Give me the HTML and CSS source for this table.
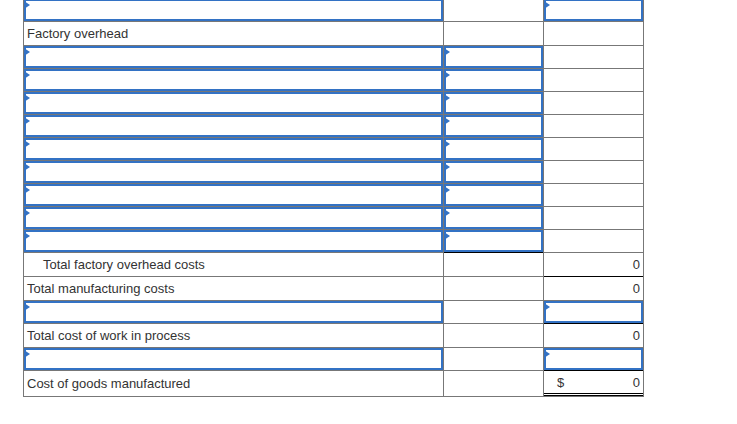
FILE: index.html
```html
<!DOCTYPE html>
<html>
<head>
<meta charset="utf-8">
<link rel="stylesheet" href="styles.css">
</head>
<body>
<div class="sheet">
  <div class="row r-in"><div class="cell"><div class="inp"></div></div><div class="cell"></div><div class="cell"><div class="inp"></div></div></div>
  <div class="row r-tx"><div class="cell lbl">Factory overhead</div><div class="cell"></div><div class="cell"></div></div>
  <div class="row r-in"><div class="cell"><div class="inp"></div></div><div class="cell"><div class="inp"></div></div><div class="cell"></div></div>
  <div class="row r-in"><div class="cell"><div class="inp"></div></div><div class="cell"><div class="inp"></div></div><div class="cell"></div></div>
  <div class="row r-in"><div class="cell"><div class="inp"></div></div><div class="cell"><div class="inp"></div></div><div class="cell"></div></div>
  <div class="row r-in"><div class="cell"><div class="inp"></div></div><div class="cell"><div class="inp"></div></div><div class="cell"></div></div>
  <div class="row r-in"><div class="cell"><div class="inp"></div></div><div class="cell"><div class="inp"></div></div><div class="cell"></div></div>
  <div class="row r-in"><div class="cell"><div class="inp"></div></div><div class="cell"><div class="inp"></div></div><div class="cell"></div></div>
  <div class="row r-in"><div class="cell"><div class="inp"></div></div><div class="cell"><div class="inp"></div></div><div class="cell"></div></div>
  <div class="row r-in"><div class="cell"><div class="inp"></div></div><div class="cell"><div class="inp"></div></div><div class="cell"></div></div>
  <div class="row r-in"><div class="cell"><div class="inp"></div></div><div class="cell"><div class="inp"></div></div><div class="cell"></div></div>
  <div class="row r-tx"><div class="cell lbl indent">Total factory overhead costs</div><div class="cell sum"></div><div class="cell num">0</div></div>
  <div class="row r-tx"><div class="cell lbl">Total manufacturing costs</div><div class="cell"></div><div class="cell num sum">0</div></div>
  <div class="row r-in"><div class="cell"><div class="inp"></div></div><div class="cell"></div><div class="cell"><div class="inp"></div></div></div>
  <div class="row r-tx"><div class="cell lbl">Total cost of work in process</div><div class="cell"></div><div class="cell num sum">0</div></div>
  <div class="row r-in"><div class="cell"><div class="inp"></div></div><div class="cell"></div><div class="cell"><div class="inp"></div></div></div>
  <div class="row r-last"><div class="cell lbl">Cost of goods manufactured</div><div class="cell"></div><div class="cell num sum dbl"><span class="cur">$</span><span>0</span></div></div>
</div>
</body>
</html>
```

FILE: styles.css
```css
html, body {
  margin: 0;
  padding: 0;
  background: #fff;
}

body {
  font-family: "Liberation Sans", Arial, sans-serif;
  font-size: 13px;
  color: #333;
}

.sheet {
  margin: -2px 0 0 23px;
  width: 619px;
  padding: 1px;
  background: #777;
  display: flex;
  flex-direction: column;
  gap: 1px;
}

.row {
  display: grid;
  grid-template-columns: 419px 99px 99px;
  gap: 1px;
}

.r-in { height: 22px; }
.r-tx { height: 23px; }
.r-last { height: 25px; }

.cell {
  background: #fff;
  position: relative;
  box-sizing: border-box;
  display: flex;
  align-items: center;
}

.lbl {
  padding-left: 3px;
}

.indent {
  padding-left: 19px;
}

.num {
  justify-content: flex-end;
  padding-right: 3px;
}

.sum {
  box-shadow: 0 -1px 0 #000;
}

.dbl {
  border-bottom: 3px double #000;
  justify-content: space-between;
  padding-left: 13px;
  padding-top: 1px;
}

.inp {
  position: relative;
  box-sizing: border-box;
  width: 100%;
  height: 100%;
  border: 2px solid #3372c4;
  background: #fff;
}

.inp::before {
  content: "";
  position: absolute;
  left: -2px;
  top: 0;
  width: 0;
  height: 0;
  border-left: 6px solid #3372c4;
  border-top: 4px solid transparent;
  border-bottom: 4px solid transparent;
}
```
